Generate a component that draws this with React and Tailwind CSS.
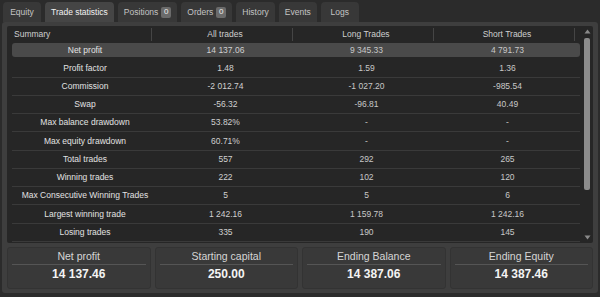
import React from "react";

const tabs = [
  { name: "Equity" },
  { name: "Trade statistics", active: true },
  { name: "Positions", badge: "0" },
  { name: "Orders", badge: "0" },
  { name: "History" },
  { name: "Events" },
  { name: "Logs" },
];

const rows = [
  ["Net profit", "14 137.06", "9 345.33", "4 791.73"],
  ["Profit factor", "1.48", "1.59", "1.36"],
  ["Commission", "-2 012.74", "-1 027.20", "-985.54"],
  ["Swap", "-56.32", "-96.81", "40.49"],
  ["Max balance drawdown", "53.82%", "-", "-"],
  ["Max equity drawdown", "60.71%", "-", "-"],
  ["Total trades", "557", "292", "265"],
  ["Winning trades", "222", "102", "120"],
  ["Max Consecutive Winning Trades", "5", "5", "6"],
  ["Largest winning trade", "1 242.16", "1 159.78", "1 242.16"],
  ["Losing trades", "335", "190", "145"],
];

const cards = [
  ["Net profit", "14 137.46"],
  ["Starting capital", "250.00"],
  ["Ending Balance", "14 387.06"],
  ["Ending Equity", "14 387.46"],
];

export default function App() {
  return (
    <div className="w-[600px] h-[297px] bg-[#2b2b2b] flex flex-col font-['Liberation_Sans',Arial,sans-serif] overflow-hidden">
      {/* Tabs */}
      <div className="h-[22px] flex items-end gap-[4px] pl-[3px]">
        {tabs.map((t) => (
          <div
            key={t.name}
            className={`h-[20px] min-w-[38px] px-[6px] flex items-center justify-center gap-[3px] rounded-t-[4px] text-[8.5px] ${
              t.active ? "bg-[#454545] text-[#f2f2f2]" : "bg-[#383838] text-[#c4c4c4]"
            }`}
          >
            <span>{t.name}</span>
            {t.badge && (
              <span className="h-[11px] min-w-[10px] px-[2px] rounded-[2px] bg-[#6b6b6b] text-[#f0f0f0] text-[8px] flex items-center justify-center">
                {t.badge}
              </span>
            )}
          </div>
        ))}
      </div>

      {/* Panel */}
      <div className="mx-[2px] h-[271px] bg-[#3e3e3e] rounded-[3px] px-[5px] pt-[4px] flex flex-col">
        {/* Table */}
        <div className="h-[217px] bg-[#262626] rounded-[2px] flex pl-[5px] pr-[2px]">
          <div className="w-[568px] flex flex-col">
            {/* Header */}
            <div className="h-[15px] grid grid-cols-[140px_141px_141px_141px_5px] text-[8.5px] text-[#cfcfcf]">
              <div className="flex items-center pl-[2px] border-r border-[#454545] my-[2px]">Summary</div>
              <div className="flex items-center justify-center pl-[6px] border-r border-[#454545] my-[2px]">All trades</div>
              <div className="flex items-center justify-center pl-[6px] border-r border-[#454545] my-[2px]">Long Trades</div>
              <div className="flex items-center justify-center pl-[6px] border-r border-[#454545] my-[2px]">Short Trades</div>
              <div />
            </div>
            {rows.map((r, i) => (
              <div
                key={r[0]}
                className={`h-[18.27px] ${i === 0 ? "py-[2px]" : "border-b border-[#3a3a3a]"}`}
              >
                <div
                  className={`h-full grid grid-cols-[140px_141px_141px_141px] text-[8.5px] items-center ${
                    i === 0 ? "bg-[#4a4a4a] rounded-[3px]" : ""
                  }`}
                >
                  <div className="text-center pl-[6px] text-[#e2e2e2]">{r[0]}</div>
                  <div className="text-center pl-[6px] text-[#d0d0d0]">{r[1]}</div>
                  <div className="text-center pl-[6px] text-[#c8c8c8]">{r[2]}</div>
                  <div className="text-center pl-[6px] text-[#c8c8c8]">{r[3]}</div>
                </div>
              </div>
            ))}
          </div>
          {/* Scrollbar */}
          <div className="w-[10px] ml-[3px] flex flex-col items-center pt-[3px] pb-[3px]">
            <svg width="7" height="5" viewBox="0 0 7 5">
              <path d="M3.5 0.5 L6.5 4.5 L0.5 4.5 Z" fill="#8a8a8a" />
            </svg>
            <div className="w-[6px] h-[152px] mt-[4px] bg-[#8c8c8c] rounded-[2px]" />
            <div className="flex-1" />
            <svg width="7" height="5" viewBox="0 0 7 5">
              <path d="M0.5 0.5 L6.5 0.5 L3.5 4.5 Z" fill="#8a8a8a" />
            </svg>
          </div>
        </div>

        {/* Cards */}
        <div className="mt-[4px] h-[42px] grid grid-cols-4 gap-[4px]">
          {cards.map((c) => (
            <div key={c[0]} className="bg-[#393939] rounded-[3px] border border-[#333333] px-[4px] pb-[5px] flex flex-col items-center">
              <div className="h-[17px] w-full flex items-center justify-center pt-[1px] text-[10.5px] text-[#d6d6d6] border-b border-[#555555]">
                {c[0]}
              </div>
              <div className="flex-1 flex items-center justify-center text-[12px] font-bold text-[#f4f4f4]">{c[1]}</div>
            </div>
          ))}
        </div>
      </div>
    </div>
  );
}
